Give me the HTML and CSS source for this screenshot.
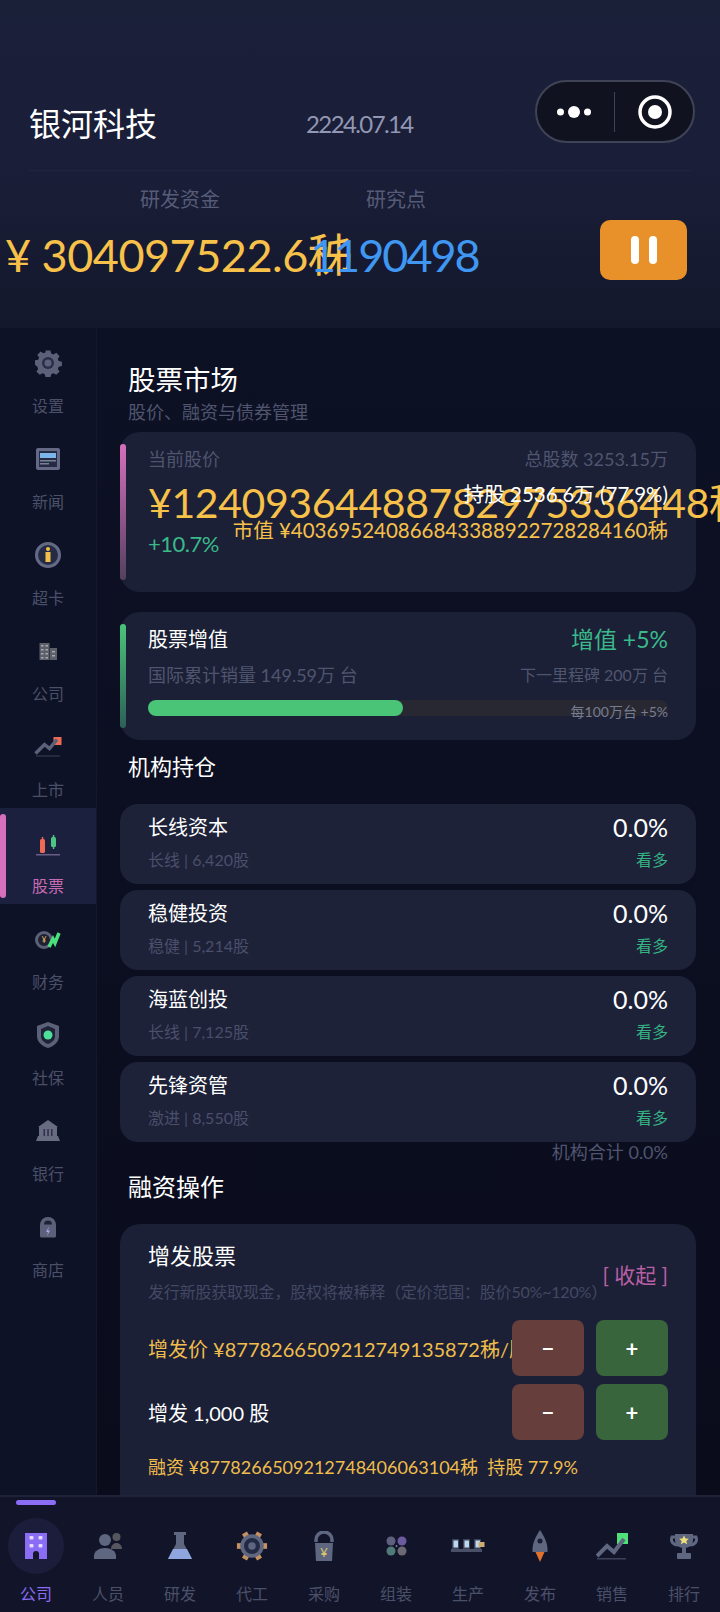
FILE: index.html
```html
<!DOCTYPE html>
<html>
<head>
  <title>银河科技</title>
  <link rel="stylesheet" href="styles.css">
</head>
<body>
  <header class="top">
    <div class="title-row">
      <div class="company">银河科技</div>
      <div class="date">2224.07.14</div>
      <div class="capsule">
        <svg class="cap-dots" width="34" height="12" viewBox="0 0 34 12"><circle cx="3.500" cy="6" r="3.500" fill="#fff"/><circle cx="17" cy="6" r="6" fill="#fff"/><circle cx="30.500" cy="6" r="3.500" fill="#fff"/></svg>
        <span class="cap-line"></span>
        <svg class="cap-target" width="34" height="34" viewBox="0 0 34 34"><circle cx="17" cy="17" r="15" fill="none" stroke="#fff" stroke-width="3.500"/><circle cx="17" cy="17" r="7" fill="#fff"/></svg>
      </div>
    </div>
    <div class="top-line"></div>
    <div class="res-row">
      <div class="res res-money">
        <div class="res-label">研发资金</div>
        <div class="res-val gold">¥ 304097522.6秭</div>
      </div>
      <div class="res res-point">
        <div class="res-label">研究点</div>
        <div class="res-val blue">1190498</div>
      </div>
      <div class="pause"><i></i><i></i></div>
    </div>
  </header>

  <div class="middle">
    <nav class="side">
      <div class="side-item">
        <svg width="28" height="28" viewBox="0 0 28 28"><path fill="#5b6178" d="M11.500 1h5l.7 3.200 2.300 1 2.800-1.700 3.300 3.500-1.800 2.700.9 2.300 3.200.7v4.500l-3.200.7-.9 2.300 1.800 2.700-3.300 3.500-2.800-1.700-2.300 1-.7 3.200h-5l-.7-3.200-2.300-1-2.800 1.700-3.300-3.500 1.800-2.700-.9-2.300L1 15.800v-4.500l3.200-.7.900-2.300-1.800-2.700 3.300-3.500 2.800 1.700 2.300-1z" transform="translate(0 .5) scale(1 .96)"/><circle cx="14" cy="14" r="6" fill="#2a2e46"/><circle cx="14" cy="14" r="3.500" fill="#5b6178"/></svg>
        <span>设置</span>
      </div>
      <div class="side-item">
        <svg width="28" height="28" viewBox="0 0 28 28"><rect x="2" y="3" width="24" height="22" rx="2" fill="#646a85"/><rect x="5" y="6" width="18" height="16" fill="#262b45"/><rect x="6" y="8" width="16" height="5" fill="#7db4ea"/><rect x="6" y="15" width="16" height="1.500" fill="#7a8098"/><rect x="6" y="18" width="9" height="1.500" fill="#7a8098"/></svg>
        <span>新闻</span>
      </div>
      <div class="side-item">
        <svg width="28" height="28" viewBox="0 0 28 28"><circle cx="14" cy="14" r="11.500" fill="#262b45" stroke="#646a85" stroke-width="3"/><circle cx="14" cy="8" r="2" fill="#f2c04a"/><rect x="11.500" y="11" width="5" height="10" fill="#f2c04a"/></svg>
        <span>超卡</span>
      </div>
      <div class="side-item">
        <svg width="28" height="28" viewBox="0 0 28 28"><rect x="5.500" y="6" width="10" height="17" fill="#5d6068"/><rect x="16" y="11" width="7" height="12" fill="#5d6068"/><g fill="#a6a9b2"><rect x="7" y="8" width="2.500" height="1.500"/><rect x="11.500" y="8" width="2.500" height="1.500"/><rect x="7" y="12" width="2.500" height="1.500"/><rect x="11.500" y="12" width="2.500" height="1.500"/><rect x="7" y="16" width="2.500" height="1.500"/><rect x="11.500" y="16" width="2.500" height="1.500"/><rect x="7" y="20" width="2.500" height="1.500"/><rect x="11.500" y="20" width="2.500" height="1.500"/><rect x="18" y="14" width="3" height="1.500"/><rect x="18" y="18" width="3" height="1.500"/></g></svg>
        <span>公司</span>
      </div>
      <div class="side-item">
        <svg width="28" height="28" viewBox="0 0 28 28"><rect x="19.500" y="4" width="8" height="8" fill="#ef6a55"/><path d="M1.500 20.500l9-9 5 4 7.500-9" fill="none" stroke="#5b6178" stroke-width="3.500"/><rect x="2" y="22.500" width="24" height="1" fill="#3c4058"/></svg>
        <span>上市</span>
      </div>
      <div class="side-item side-on">
        <i class="side-mark"></i>
        <svg width="28" height="28" viewBox="0 0 28 28"><rect x="6" y="10" width="5" height="14" rx="1.500" fill="#ef6a55"/><rect x="7.800" y="8" width="1.500" height="16" fill="#ef6a55"/><rect x="17" y="8" width="5" height="10" rx="1.500" fill="#4cc584"/><rect x="18.800" y="6" width="1.500" height="14" fill="#4cc584"/><rect x="2" y="25" width="24" height="1.500" fill="#6a5f82"/></svg>
        <span>股票</span>
      </div>
      <div class="side-item">
        <svg width="28" height="28" viewBox="0 0 28 28"><circle cx="10" cy="15" r="7.500" fill="#1f2030" stroke="#5b6178" stroke-width="3"/><text x="10" y="18" font-size="8" fill="#d9b26a" text-anchor="middle" font-family="Noto Sans">¥</text><path d="M15 22l4-8 2 4 4-10" fill="none" stroke="#4ce07a" stroke-width="3.500"/></svg>
        <span>财务</span>
      </div>
      <div class="side-item">
        <svg width="28" height="28" viewBox="0 0 28 28"><path d="M14 1l11 4v10c0 6-5 10-11 12C8 25 3 21 3 15V5z" fill="#5b6178"/><path d="M14 5l7 3v7c0 4-3 6.500-7 8-4-1.500-7-4-7-8V8z" fill="#1e2236"/><circle cx="14" cy="14" r="4.500" fill="#4ce09a"/></svg>
        <span>社保</span>
      </div>
      <div class="side-item">
        <svg width="28" height="28" viewBox="0 0 28 28"><path d="M14 3l10 7H4z" fill="#686b82"/><rect x="5" y="10" width="18" height="10" fill="#686b82"/><rect x="9.500" y="12" width="1.500" height="8" fill="#2e3048"/><rect x="13.300" y="12" width="1.500" height="8" fill="#2e3048"/><rect x="17" y="12" width="1.500" height="8" fill="#2e3048"/><path d="M4 19h20l2 5H2z" fill="#686b82"/></svg>
        <span>银行</span>
      </div>
      <div class="side-item">
        <svg width="28" height="28" viewBox="0 0 28 28"><path d="M6 12a8 8 0 0 1 16 0v11a1.500 1.500 0 0 1-1.500 1.500h-13A1.500 1.500 0 0 1 6 23z" fill="#5b6178"/><path d="M10 11.500a4 4 0 0 1 8 0z" fill="#1e2236"/><path d="M15 13.500l-3 5.500h2l-1 4 3-5.500h-2z" fill="#a9a2f0"/></svg>
        <span>商店</span>
      </div>
    </nav>

    <main class="main">
      <h2 class="page-title">股票市场</h2>
      <div class="page-sub">股价、融资与债券管理</div>

      <section class="card card-price">
        <i class="card-bar bar-pink"></i>
        <div class="price-head">
          <span>当前股价</span>
          <span>总股数 3253.15万</span>
        </div>
        <div class="price-body">
          <div class="price-left">
            <div class="price-big">¥12409364488782975336448秭</div>
            <div class="price-up">+10.7%</div>
          </div>
          <div class="price-right">
            <div class="price-hold">持股 2536.6万 (77.9%)</div>
            <div class="price-cap">市值 ¥403695240866843388922728284160秭</div>
          </div>
        </div>
      </section>

      <section class="card card-boost">
        <i class="card-bar bar-green"></i>
        <div class="boost-head">
          <span class="boost-name">股票增值</span>
          <span class="boost-val">增值 +5%</span>
        </div>
        <div class="boost-meta">
          <span>国际累计销量 149.59万 台</span>
          <span class="boost-next">下一里程碑 200万 台</span>
        </div>
        <div class="progress">
          <div class="progress-fill" style="width: 49%"></div>
          <span class="progress-note">每100万台 +5%</span>
        </div>
      </section>

      <h3 class="sec-title sec-hold">机构持仓</h3>
      <div class="hold-list">
        <div class="hold">
          <div><div class="hold-name">长线资本</div><div class="hold-sub">长线 | 6,420股</div></div>
          <div class="hold-right"><div class="hold-pct">0.0%</div><div class="hold-tag">看多</div></div>
        </div>
        <div class="hold">
          <div><div class="hold-name">稳健投资</div><div class="hold-sub">稳健 | 5,214股</div></div>
          <div class="hold-right"><div class="hold-pct">0.0%</div><div class="hold-tag">看多</div></div>
        </div>
        <div class="hold">
          <div><div class="hold-name">海蓝创投</div><div class="hold-sub">长线 | 7,125股</div></div>
          <div class="hold-right"><div class="hold-pct">0.0%</div><div class="hold-tag">看多</div></div>
        </div>
        <div class="hold">
          <div><div class="hold-name">先锋资管</div><div class="hold-sub">激进 | 8,550股</div></div>
          <div class="hold-right"><div class="hold-pct">0.0%</div><div class="hold-tag">看多</div></div>
        </div>
      </div>
      <div class="hold-total">机构合计 0.0%</div>

      <h3 class="sec-title sec-fin">融资操作</h3>
      <section class="card card-fin">
        <div class="fin-head">
          <div class="fin-info">
            <div class="fin-name">增发股票</div>
            <div class="fin-desc">发行新股获取现金，股权将被稀释（定价范围：股价50%~120%）</div>
          </div>
          <div class="fin-fold">[ 收起 ]</div>
        </div>
        <div class="fin-row">
          <div class="fin-label fin-gold">增发价 ¥8778266509212749135872秭/股</div>
          <div class="step step-minus">−</div>
          <div class="step step-plus">+</div>
        </div>
        <div class="fin-row">
          <div class="fin-label">增发 1,000 股</div>
          <div class="step step-minus">−</div>
          <div class="step step-plus">+</div>
        </div>
        <div class="fin-sum">融资 ¥8778266509212748406063104秭&nbsp; 持股 77.9%</div>
      </section>
    </main>
  </div>

  <footer class="tabs">
    <div class="tab tab-on">
      <i class="tab-mark"></i>
      <div class="tab-icon">
        <svg width="22" height="26" viewBox="0 0 22 26"><rect width="22" height="26" fill="#8a6cf5"/><g fill="#e4dcff"><rect x="4.500" y="3" width="4" height="3.500" rx="1"/><rect x="13.500" y="3" width="4" height="3.500" rx="1"/><rect x="4.500" y="11" width="4" height="3.500" rx="1"/><rect x="13.500" y="11" width="4" height="3.500" rx="1"/></g><path d="M8 26v-5a3 3 0 0 1 6 0v5z" fill="#14162b"/></svg>
      </div>
      <span>公司</span>
    </div>
    <div class="tab">
      <div class="tab-icon">
        <svg width="28" height="26" viewBox="0 0 28 26"><circle cx="22.500" cy="4" r="4" fill="#56565f"/><path d="M17 16c0-3.500 2.500-6 5.500-6s5.500 2.500 5.500 6z" fill="#56565f"/><circle cx="11" cy="7" r="6" fill="#5f6680"/><path d="M0 26v-3c0-5 5-8 11-8s11 3 11 8v3z" fill="#5f6680"/></svg>
      </div>
      <span>人员</span>
    </div>
    <div class="tab">
      <div class="tab-icon">
        <svg width="24" height="28" viewBox="0 0 24 28"><rect x="6" y="0" width="12" height="3" fill="#5f6680"/><path d="M8 3h8v9l8 15H0l8-15z" fill="#5f6680"/><path d="M5 17h14l5 10H0z" fill="#8ea6dd"/></svg>
      </div>
      <span>研发</span>
    </div>
    <div class="tab">
      <div class="tab-icon">
        <svg width="32" height="32" viewBox="0 0 34 34"><g fill="#c59160"><rect x="14" y="1" width="6" height="5" transform="rotate(-30 17 17)"/><rect x="14" y="1" width="6" height="5" transform="rotate(30 17 17)"/><rect x="14" y="1" width="6" height="5" transform="rotate(90 17 17)"/><rect x="14" y="1" width="6" height="5" transform="rotate(150 17 17)"/><rect x="14" y="1" width="6" height="5" transform="rotate(210 17 17)"/><rect x="14" y="1" width="6" height="5" transform="rotate(270 17 17)"/></g><circle cx="17" cy="17" r="10.500" fill="#232a46" stroke="#5f6680" stroke-width="4"/><circle cx="17" cy="17" r="4" fill="#5f6680"/></svg>
      </div>
      <span>代工</span>
    </div>
    <div class="tab">
      <div class="tab-icon">
        <svg width="20" height="30" viewBox="0 0 20 30"><path d="M2 11V9a8 8 0 0 1 16 0v2" fill="none" stroke="#5f6680" stroke-width="3.500"/><path d="M1 12h18l-1 18H2z" fill="#5f6680"/><text x="10" y="26" font-size="13" fill="#d9c56a" text-anchor="middle" font-family="Noto Sans">¥</text></svg>
      </div>
      <span>采购</span>
    </div>
    <div class="tab">
      <div class="tab-icon">
        <svg width="21" height="20" viewBox="0 0 21 20"><circle cx="5" cy="5" r="4.500" fill="#5f6080"/><circle cx="16" cy="5" r="4.500" fill="#6a5a9e"/><circle cx="5" cy="15" r="4.500" fill="#4f7a78"/><circle cx="16" cy="15" r="4.500" fill="#6b6a72"/><path d="M9.500 10h2M10.500 9v2" stroke="#7a7f95" stroke-width="1"/></svg>
      </div>
      <span>组装</span>
    </div>
    <div class="tab">
      <div class="tab-icon">
        <svg width="34" height="14" viewBox="0 0 34 14"><rect x="0" y="10" width="31" height="3" fill="#4a5068"/><g fill="#3c4258"><rect x="1" y="0" width="7" height="10"/><rect x="12" y="0" width="7" height="10"/><rect x="23" y="0" width="7" height="10"/></g><g fill="#bcd8f0"><rect x="2.500" y="1.500" width="4.500" height="7"/><rect x="13.500" y="1.500" width="4.500" height="7"/><rect x="24.500" y="1.500" width="4.500" height="7"/></g><rect x="27.500" y="3" width="6" height="5" fill="#d0ac74"/></svg>
      </div>
      <span>生产</span>
    </div>
    <div class="tab">
      <div class="tab-icon">
        <svg width="16" height="32" viewBox="0 0 16 32"><path d="M8 0c4 6 7.500 13 7.500 19v3H.5v-3C.5 13 4 6 8 0z" fill="#5f6680"/><circle cx="8" cy="11" r="2.500" fill="#1a1d33"/><path d="M3.500 22h9L8 32z" fill="#e0702c"/></svg>
      </div>
      <span>发布</span>
    </div>
    <div class="tab">
      <div class="tab-icon">
        <svg width="32" height="27" viewBox="0 0 32 27"><rect x="21" y="0" width="11" height="11" fill="#4fe07a"/><path d="M1 23l10-10 7 6 10-13" fill="none" stroke="#5f6680" stroke-width="4"/><rect x="1" y="25" width="29" height="1.500" fill="#3c4058"/></svg>
      </div>
      <span>销售</span>
    </div>
    <div class="tab">
      <div class="tab-icon">
        <svg width="28" height="25" viewBox="0 0 28 25"><path d="M6 3H2C0 8 4 11 8 11M22 3h4c2 5-2 8-6 8" fill="none" stroke="#5f6680" stroke-width="3"/><path d="M5 0h18v6c0 5-4 8-9 8S5 11 5 6z" fill="#5f6680"/><rect x="12" y="13" width="4" height="6" fill="#5f6680"/><rect x="7" y="19" width="14" height="6" rx="1" fill="#5f6680"/><path d="M14 1.500l1.500 3 3.300.3-2.500 2.200.8 3.200-3.100-1.800-3.100 1.800.8-3.200-2.500-2.200 3.300-.3z" fill="#f0e078"/></svg>
      </div>
      <span>排行</span>
    </div>
  </footer>
</body>
</html>
```

FILE: styles.css
```css
* {
  box-sizing: border-box;
}

body {
  margin: 0;
  width: 720px;
  height: 1612px;
  overflow: hidden;
  display: flex;
  flex-direction: column;
  background: #0b0e20;
  color: #fff;
  font-family: Lato, "Noto Sans CJK SC", sans-serif;
}

.top {
  height: 328px;
  background: linear-gradient(180deg, #1b2039 0%, #1a1e38 50%, #14182c 100%);
  flex-shrink: 0;
}

.title-row {
  height: 170px;
  padding: 80px 25px 0 29px;
  display: flex;
  align-items: flex-start;
}

.company {
  font-size: 32px;
  line-height: 46px;
  margin-top: 21px;
  width: 277px;
}

.date {
  font-size: 24px;
  line-height: 46px;
  color: #9297b3;
  margin-top: 21px;
  width: 229px;
  letter-spacing: -1.6px;
}

.capsule {
  width: 160px;
  height: 63px;
  border-radius: 32px;
  background: #10121f;
  border: 2px solid #3f4356;
  display: flex;
  align-items: center;
  padding-left: 20px;
}

.cap-dots {
  margin-right: 23px;
}

.cap-line {
  width: 1px;
  height: 40px;
  background: #3f4356;
}

.cap-target {
  margin-left: 23px;
}

.top-line {
  height: 1px;
  margin: 0 28px;
  background: #1e2340;
}

.res-row {
  display: flex;
  padding-top: 14px;
}

.res {
  width: 0;
  white-space: nowrap;
}

.res-label {
  font-size: 20px;
  line-height: 28px;
  color: #565c78;
}

.res-val {
  font-size: 45px;
  line-height: 60px;
  margin-top: 12px;
  letter-spacing: -0.5px;
}

.res-money {
  margin-left: 5px;
  flex: 0 0 305px;
}

.res-money .res-label {
  margin-left: 135px;
}

.res-point {
  flex: 0 0 290px;
}

.res-point .res-label {
  margin-left: 56px;
}

.gold {
  color: #f7c14a;
}

.blue {
  color: #3f97f2;
  letter-spacing: -2px;
}

.pause {
  width: 87px;
  height: 60px;
  margin-top: 35px;
  background: #e8912a;
  border-radius: 10px;
  display: flex;
  justify-content: center;
  align-items: center;
  gap: 10px;
}

.pause i {
  width: 8px;
  height: 28px;
  background: #fff;
  border-radius: 4px;
}

.middle {
  flex: 1;
  display: flex;
  min-height: 0;
}

.side {
  width: 96px;
  flex-shrink: 0;
  background: #0e1226;
  display: flex;
  flex-direction: column;
}

.side-item {
  position: relative;
  height: 96px;
  display: flex;
  flex-direction: column;
  align-items: center;
  padding-top: 21px;
  font-size: 16px;
  color: #4b5069;
}

.side-item span {
  margin-top: 17px;
  line-height: 24px;
}

.side-on {
  background: #1b203e;
}

.side-on span {
  color: #c66bb1;
}

.side-mark {
  position: absolute;
  left: 0;
  top: 6px;
  width: 6px;
  height: 84px;
  border-radius: 3px;
  background: #d76fbd;
}

.main {
  flex: 1;
  min-width: 0;
  padding: 32px 24px 0 23px;
  border-left: 1px solid #14182e;
  background: linear-gradient(180deg, #0d1124 0%, #0a0c1c 100%);
}

.page-title {
  margin: 0 0 0 8px;
  font-size: 27.500px;
  line-height: 40px;
  font-weight: 400;
}

.page-sub {
  margin-left: 8px;
  font-size: 18px;
  line-height: 24px;
  color: #50556f;
}

.card {
  position: relative;
  background: #1b2036;
  border-radius: 20px;
}

.card-bar {
  position: absolute;
  left: 0;
  top: 12px;
  bottom: 12px;
  width: 6px;
  border-radius: 3px;
}

.bar-pink {
  background: linear-gradient(180deg, #d76fbd, #54405f);
}

.bar-green {
  background: linear-gradient(180deg, #4ac47a, #2c6058);
}

.card-price {
  margin-top: 8px;
  height: 160px;
  padding: 14px 28px 0;
}

.price-head {
  display: flex;
  justify-content: space-between;
  font-size: 18px;
  line-height: 26px;
  color: #50556f;
}

.price-body {
  display: flex;
  justify-content: space-between;
}

.price-left {
  width: 0;
  white-space: nowrap;
}

.price-big {
  font-size: 41px;
  line-height: 56px;
  margin-top: 3px;
  color: #f7c14a;
  letter-spacing: -0.4px;
}

.price-up {
  font-size: 22px;
  line-height: 28px;
  color: #3ab98a;
  margin-top: -1px;
  letter-spacing: -0.5px;
}

.price-right {
  text-align: right;
  white-space: nowrap;
  position: relative;
}

.price-hold {
  font-size: 20.500px;
  line-height: 28px;
  margin-top: 8px;
}

.price-cap {
  font-size: 20.500px;
  line-height: 28px;
  margin-top: 8px;
  color: #f7c14a;
}

.card-boost {
  margin-top: 20px;
  height: 128px;
  padding: 12px 28px 0;
}

.boost-head {
  display: flex;
  justify-content: space-between;
  align-items: center;
  line-height: 30px;
}

.boost-name {
  font-size: 20px;
}

.boost-val {
  font-size: 23px;
  color: #3ab98a;
}

.boost-meta {
  display: flex;
  justify-content: space-between;
  align-items: center;
  margin-top: 8px;
  font-size: 18px;
  line-height: 26px;
  color: #50556f;
}

.boost-next {
  font-size: 16px;
}

.progress {
  position: relative;
  margin-top: 12px;
  height: 16px;
  border-radius: 8px;
  background: #272831;
}

.progress-fill {
  height: 16px;
  border-radius: 8px;
  background: #4ac477;
}

.progress-note {
  position: absolute;
  right: 0;
  top: 2px;
  font-size: 14px;
  line-height: 20px;
  color: #787c90;
}

.sec-title {
  margin: 0 0 0 8px;
  font-size: 22px;
  line-height: 32px;
  font-weight: 400;
}

.sec-hold {
  margin-top: 11px;
}

.hold-list {
  margin-top: 21px;
  display: flex;
  flex-direction: column;
  gap: 6px;
}

.hold {
  height: 80px;
  border-radius: 18px;
  background: #1d2239;
  padding: 9px 28px 0;
  display: flex;
  justify-content: space-between;
}

.hold-name {
  font-size: 20px;
  line-height: 28px;
}

.hold-sub {
  margin-top: 8px;
  font-size: 16px;
  line-height: 22px;
  color: #4a4f6a;
}

.hold-right {
  text-align: right;
}

.hold-pct {
  font-size: 25px;
  line-height: 28px;
}

.hold-tag {
  margin-top: 8px;
  font-size: 16px;
  line-height: 22px;
  color: #35b383;
}

.hold-total {
  text-align: right;
  padding-right: 28px;
  font-size: 18px;
  line-height: 20px;
  color: #50556f;
}

.sec-fin {
  margin-top: 9px;
  font-size: 24px;
}

.card-fin {
  margin-top: 21px;
  height: 300px;
  padding: 16px 28px 0;
}

.fin-head {
  display: flex;
  justify-content: space-between;
  align-items: flex-end;
  white-space: nowrap;
}

.fin-info {
  flex: 1;
  min-width: 0;
}

.fin-name {
  font-size: 22px;
  line-height: 32px;
}

.fin-desc {
  margin-top: 8px;
  font-size: 16px;
  line-height: 24px;
  color: #434963;
  letter-spacing: -0.2px;
}

.fin-fold {
  flex-shrink: 0;
  font-size: 21px;
  line-height: 28px;
  color: #b85fa5;
  margin-bottom: 15px;
}

.fin-row {
  display: flex;
  align-items: center;
  height: 56px;
  margin-bottom: 8px;
}

.fin-head + .fin-row {
  margin-top: 16px;
}

.fin-label {
  flex: 1;
  min-width: 0;
  overflow: hidden;
  white-space: nowrap;
  font-size: 20px;
}

.fin-gold {
  color: #f0bd4c;
}

.step {
  width: 72px;
  height: 56px;
  flex-shrink: 0;
  border-radius: 8px;
  display: flex;
  align-items: center;
  justify-content: center;
  font-size: 22px;
  font-weight: 700;
}

.step-minus {
  background: #663f3c;
}

.step-plus {
  margin-left: 12px;
  background: #38653b;
}

.fin-sum {
  margin-top: 14px;
  font-size: 18px;
  line-height: 26px;
  color: #f0bd4c;
  white-space: nowrap;
}

.tabs {
  height: 117px;
  flex-shrink: 0;
  position: relative;
  display: flex;
  background: #12152a;
  border-top: 2px solid #1e2338;
}

.tab {
  position: relative;
  width: 72px;
  display: flex;
  flex-direction: column;
  align-items: center;
  font-size: 16px;
  color: #4b5069;
}

.tab-icon {
  height: 56px;
  width: 56px;
  margin-top: 21px;
  border-radius: 50%;
  display: flex;
  align-items: center;
  justify-content: center;
}

.tab span {
  margin-top: 8px;
  line-height: 24px;
}

.tab-on .tab-icon {
  background: #1c1d3a;
}

.tab-on span {
  color: #8a6cf5;
}

.tab-mark {
  position: absolute;
  left: 16px;
  top: 3px;
  width: 40px;
  height: 5px;
  border-radius: 3px;
  background: #8a6cf5;
}
```
